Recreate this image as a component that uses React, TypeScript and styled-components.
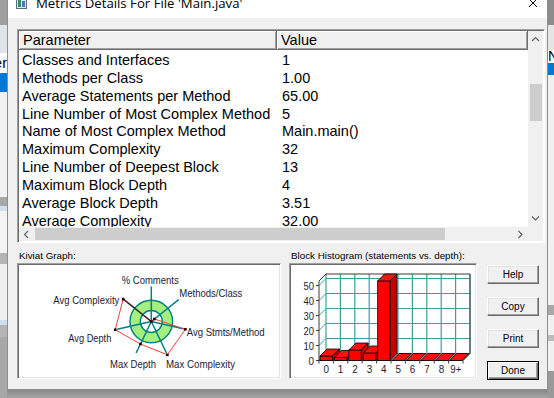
import React from 'react';
import styled, { createGlobalStyle } from 'styled-components';

const GlobalStyle = createGlobalStyle`
  html, body {
    margin: 0;
    padding: 0;
    overflow: hidden;
  }
  body {
    width: 554px;
    height: 398px;
    background: #a2a2a2;
    font-family: 'Liberation Sans', Arial, sans-serif;
  }
`;

const Screen = styled.div`
  display: flex;
  width: 554px;
  height: 398px;
  overflow: hidden;
`;

const Backdrop = styled.div<{ $width: number }>`
  flex: none;
  width: ${(p) => p.$width}px;
  display: flex;
  flex-direction: column;
  overflow: hidden;
`;

const Band = styled.div<{ $h: number; $bg: string; $end?: boolean; $ink?: string }>`
  flex: none;
  height: ${(p) => p.$h}px;
  background: ${(p) => p.$bg};
  color: ${(p) => p.$ink ?? '#000'};
  font: 14.5px 'Liberation Sans', Arial, sans-serif;
  line-height: ${(p) => p.$h}px;
  white-space: nowrap;
  overflow: hidden;
  display: flex;
  justify-content: ${(p) => (p.$end ? 'flex-end' : 'flex-start')};
`;

const BandFill = styled.div<{ $bg: string }>`
  flex: 1;
  background: ${(p) => p.$bg};
`;

const DialogColumn = styled.div`
  flex: none;
  width: 541px;
  display: flex;
  flex-direction: column;
`;

const Dialog = styled.div`
  flex: none;
  height: 390px;
  box-sizing: border-box;
  border: 1px solid #8e8e8e;
  border-top: none;
  background: #f0f0f0;
  display: flex;
  flex-direction: column;
`;

const BelowDialog = styled.div`
  flex: 1;
  background: linear-gradient(#8a8a8a, #a4a4a4);
`;

const TitleBar = styled.div`
  flex: none;
  height: 18px;
  background: #fff;
  display: flex;
  align-items: flex-start;
  overflow: hidden;
  padding: 0 9px 0 8px;
`;

const TitleInner = styled.div`
  display: flex;
  align-items: center;
  gap: 9px;
  margin-top: -7px;
  height: 20px;
  flex: 1;
`;

const TitleText = styled.span`
  font: 13.2px 'Open Sans', 'Liberation Sans', sans-serif;
  color: #000;
  white-space: nowrap;
  flex: 1;
`;

const Body = styled.div`
  flex: 1;
  display: flex;
  flex-direction: column;
  padding: 11px 2px 0 9px;
`;

/* ---------- list view ---------- */

const ListFrame = styled.div`
  flex: none;
  width: 528px;
  height: 214px;
  box-sizing: border-box;
  border: 1px solid;
  border-color: #a0a0a0 #ffffff #ffffff #a0a0a0;
  box-shadow: inset 1px 1px 0 #6d6d6d;
  padding: 1px 0 0 1px;
  display: grid;
  grid-template-columns: 509px 15px;
  grid-template-rows: 196px 14px;
  background: #fff;
`;

const ListContent = styled.div`
  overflow: hidden;
  background: #fff;
`;

const HeaderRow = styled.div`
  display: grid;
  grid-template-columns: 258px 1fr;
  height: 19px;
  background: #f0f0f0;
`;

const HeaderCell = styled.div<{ $pad: number }>`
  box-sizing: border-box;
  height: 19px;
  border-right: 1px solid #6d6d6d;
  border-bottom: 1px solid #6d6d6d;
  box-shadow: inset 1px 1px 0 #ffffff, inset -1px -1px 0 #a0a0a0;
  padding-left: ${(p) => p.$pad}px;
  font-size: 14.5px;
  line-height: 18px;
  color: #000;
`;

const Rows = styled.div`
  padding-top: 2px;
`;

const Row = styled.div`
  display: grid;
  grid-template-columns: 258px 1fr;
  height: 17.85px;
  font-size: 14.5px;
  line-height: 17.85px;
  color: #000;
  white-space: nowrap;
`;

const Cell = styled.div<{ $pad: number }>`
  padding-left: ${(p) => p.$pad}px;
  overflow: hidden;
`;

const VScroll = styled.div`
  background: #f0f0f0;
  display: flex;
  flex-direction: column;
`;

const HScroll = styled.div`
  background: #f0f0f0;
  display: flex;
`;

const Corner = styled.div`
  background: #f0f0f0;
`;

const ArrowBox = styled.div<{ $vertical?: boolean }>`
  flex: none;
  width: 15px;
  height: ${(p) => (p.$vertical ? '17px' : '14px')};
  display: flex;
  align-items: center;
  justify-content: center;
`;

const Track = styled.div<{ $vertical?: boolean }>`
  flex: 1;
  display: flex;
  flex-direction: ${(p) => (p.$vertical ? 'column' : 'row')};
`;

const Thumb = styled.div<{ $vertical?: boolean; $offset: number; $size: number }>`
  flex: none;
  background: #cdcdcd;
  ${(p) =>
    p.$vertical
      ? `margin: ${p.$offset}px 1px 0 2px; height: ${p.$size}px;`
      : `margin: 1px 0 1px ${p.$offset}px; width: ${p.$size}px;`}
`;

/* ---------- bottom area ---------- */

const BottomArea = styled.div`
  display: flex;
  margin-top: 5px;
`;

const Group = styled.div<{ $width: number; $gap: number }>`
  flex: none;
  width: ${(p) => p.$width}px;
  margin-right: ${(p) => p.$gap}px;
  display: flex;
  flex-direction: column;
`;

const Caption = styled.div`
  height: 15px;
  line-height: 15px;
  padding-left: 2px;
  font-size: 9.8px;
  color: #000;
  white-space: nowrap;
`;

const Panel = styled.div`
  height: 116px;
  box-sizing: border-box;
  border: 1px solid;
  border-color: #a0a0a0 #ffffff #ffffff #a0a0a0;
  box-shadow: inset 1px 1px 0 #696969, inset -1px -1px 0 #e3e3e3;
  padding: 1px;
  background: #fff;
  svg {
    display: block;
  }
`;

const ButtonColumn = styled.div`
  flex: none;
  width: 52px;
  padding-top: 17px;
  display: flex;
  flex-direction: column;
  gap: 13px;
`;

const Button = styled.button<{ $default?: boolean }>`
  height: 19px;
  width: 52px;
  box-sizing: border-box;
  padding: 0;
  background: #f0f0f0;
  font: 10px 'Liberation Sans', Arial, sans-serif;
  color: #000;
  border: 1px solid;
  border-color: ${(p) => (p.$default ? '#000' : '#fff #696969 #696969 #fff')};
  box-shadow: ${(p) =>
    p.$default
      ? 'inset 1px 1px 0 #fff, inset -1px -1px 0 #696969, inset -2px -2px 0 #a0a0a0'
      : 'inset -1px -1px 0 #a0a0a0, inset 1px 1px 0 #e3e3e3'};
`;

/* ---------- icons ---------- */

const Chevron = ({ dir }: { dir: 'up' | 'down' | 'left' | 'right' }) => {
  const pts = {
    up: '1,5 4.5,1.5 8,5',
    down: '1,1.5 4.5,5 8,1.5',
    left: '5,1 1.5,4.5 5,8',
    right: '1.5,1 5,4.5 1.5,8',
  }[dir];
  const vertical = dir === 'up' || dir === 'down';
  return (
    <svg width={vertical ? 9 : 7} height={vertical ? 7 : 9}>
      <polyline points={pts} fill="none" stroke="#606060" strokeWidth="1.1" />
    </svg>
  );
};

const AppIcon = () => (
  <svg width="11" height="12" viewBox="0 0 11 12">
    <rect x="0.5" y="0.5" width="10" height="11" fill="#dfe7ee" stroke="#5b6f80" />
    <rect x="2" y="2" width="3" height="8" fill="#2f8f6f" />
    <rect x="6" y="4" width="3" height="6" fill="#4a78b8" />
  </svg>
);

const CloseIcon = () => (
  <svg width="10" height="10" viewBox="0 0 10 10">
    <path d="M1 1 L9 9 M9 1 L1 9" stroke="#000" strokeWidth="1" />
  </svg>
);

/* ---------- kiviat graph ---------- */

const KIVIAT = [
  { label: '% Comments', r: 0, tx: 102.7, ty: 19, tw: 57 },
  { label: 'Methods/Class', r: 4, tx: 160.3, ty: 31.7, tw: 63 },
  { label: 'Avg Stmts/Method', r: 35, tx: 167.7, ty: 70.7, tw: 78 },
  { label: 'Max Complexity', r: 37, tx: 147, ty: 102.7, tw: 69 },
  { label: 'Max Depth', r: 25, tx: 91, ty: 102.7, tw: 46 },
  { label: 'Avg Depth', r: 37, tx: 49.3, ty: 76.7, tw: 43 },
  { label: 'Avg Complexity', r: 36, tx: 34.3, ty: 39, tw: 66 },
];

const KiviatGraph = () => {
  const cx = 132.3;
  const cy = 56.5;
  const at = (k: number, r: number) => {
    const a = ((-90 + (k * 360) / 7) * Math.PI) / 180;
    return [cx + r * Math.cos(a), cy + r * Math.sin(a)];
  };
  const pts = KIVIAT.map((d, k) => at(k, d.r));
  const poly = pts.map((p) => p.join(',')).join(' ');
  const last = pts[pts.length - 1];
  return (
    <svg width="260" height="112">
      <circle cx={cx} cy={cy} r={21.3} fill="#a4f07f" stroke="#008080" strokeWidth="1.4" />
      <circle cx={cx} cy={cy} r={11} fill="#fff" stroke="#008080" strokeWidth="1.4" />
      {KIVIAT.map((_, k) => {
        const [x, y] = at(k, 35);
        return <line key={k} x1={cx} y1={cy} x2={x} y2={y} stroke="#008080" strokeWidth="1.5" />;
      })}
      <polyline points={poly} fill="none" stroke="#ff3b3b" strokeWidth="1" />
      <line x1={last[0]} y1={last[1]} x2={pts[0][0]} y2={pts[0][1]} stroke="#6a1616" strokeWidth="1.2" />
      {pts.map(([x, y], i) => (
        <rect key={i} x={x - 1.3} y={y - 1.3} width="2.6" height="2.6" fill="#200000" />
      ))}
      {KIVIAT.map((d) => (
        <text
          key={d.label}
          x={d.tx}
          y={d.ty}
          textLength={d.tw}
          lengthAdjust="spacingAndGlyphs"
          fontFamily="'Liberation Sans', Arial, sans-serif"
          fontSize="11"
          fill="#1c1c34"
        >
          {d.label}
        </text>
      ))}
    </svg>
  );
};

/* ---------- block histogram ---------- */

const FX = 28;
const FY = 95.5;
const DX = 7;
const DY = -7;
const COL = 14.4;
const UNIT = 1.5;
const TOP = 53;
const BARS = [3, 2, 7, 5, 53, 0, 0, 0, 0, 0];
const XLABELS = ['0', '1', '2', '3', '4', '5', '6', '7', '8', '9+'];
const GRID = '#3f9f9f';
const EDGE = '#3a3a3a';

const Histogram = () => {
  const backL = FX + DX;
  const backR = FX + DX + COL * 10;
  const backB = FY + DY;
  const backT = FY + DY - TOP * UNIT;
  const frontT = FY - TOP * UNIT;
  const ticks = [0, 10, 20, 30, 40, 50];
  return (
    <svg width="184" height="112">
      <rect x={backL} y={backT} width={COL * 10} height={backB - backT} fill="#fff" />
      {Array.from({ length: 11 }, (_, i) => (
        <g key={i}>
          <line x1={backL + COL * i} y1={backT} x2={backL + COL * i} y2={backB} stroke={GRID} strokeWidth="1.2" />
          <line x1={FX + COL * i} y1={FY} x2={backL + COL * i} y2={backB} stroke={GRID} strokeWidth="1" />
          <line x1={FX + COL * i} y1={FY} x2={FX + COL * i} y2={FY + 3} stroke={EDGE} strokeWidth="1" />
        </g>
      ))}
      {ticks.map((v) => (
        <g key={v}>
          <line x1={backL} y1={backB - v * UNIT} x2={backR} y2={backB - v * UNIT} stroke={GRID} strokeWidth="1.2" />
          <line x1={FX} y1={FY - v * UNIT} x2={backL} y2={backB - v * UNIT} stroke={GRID} strokeWidth="1" />
          <line x1={FX - 3} y1={FY - v * UNIT} x2={FX} y2={FY - v * UNIT} stroke={EDGE} strokeWidth="1" />
          <text
            x={FX - 5}
            y={FY - v * UNIT + 4}
            textAnchor="end"
            textLength={v === 0 ? 5.5 : 10.5}
            lengthAdjust="spacingAndGlyphs"
            fontFamily="'Liberation Sans', Arial, sans-serif"
            fontSize="11"
            fill="#1c1c34"
          >
            {v}
          </text>
        </g>
      ))}
      <path
        d={`M${FX} ${FY} L${FX} ${frontT} L${backL} ${backT} L${backR} ${backT} L${backR} ${backB} L${FX + COL * 10} ${FY} Z`}
        fill="none"
        stroke={EDGE}
        strokeWidth="1"
      />
      {BARS.map((v, i) => {
        const x0 = FX + COL * i + 1;
        const w = 12.4;
        const yt = FY - v * UNIT;
        const top = `${x0},${yt} ${x0 + w},${yt} ${x0 + w + DX},${yt + DY} ${x0 + DX},${yt + DY}`;
        const side = `${x0 + w},${yt} ${x0 + w + DX},${yt + DY} ${x0 + w + DX},${FY + DY} ${x0 + w},${FY}`;
        return (
          <g key={i} stroke="#000" strokeWidth="0.8" strokeLinejoin="round">
            {v > 0 && <polygon points={side} fill="#c80000" />}
            {v > 0 && <rect x={x0} y={yt} width={w} height={v * UNIT} fill="#ff0000" />}
            <polygon points={top} fill="#ff0f0f" />
          </g>
        );
      })}
      {XLABELS.map((l, i) => (
        <text
          key={l}
          x={FX + COL * i + COL / 2}
          y={108}
          textAnchor="middle"
          textLength={l.length > 1 ? 11 : 5.5}
          lengthAdjust="spacingAndGlyphs"
          fontFamily="'Liberation Sans', Arial, sans-serif"
          fontSize="11"
          fill="#1c1c34"
        >
          {l}
        </text>
      ))}
    </svg>
  );
};

/* ---------- data ---------- */

const METRICS: [string, string][] = [
  ['Classes and Interfaces', '1'],
  ['Methods per Class', '1.00'],
  ['Average Statements per Method', '65.00'],
  ['Line Number of Most Complex Method', '5'],
  ['Name of Most Complex Method', 'Main.main()'],
  ['Maximum Complexity', '32'],
  ['Line Number of Deepest Block', '13'],
  ['Maximum Block Depth', '4'],
  ['Average Block Depth', '3.51'],
  ['Average Complexity', '32.00'],
];

const LEFT_BANDS: [number, string, string?][] = [
  [25, '#9e9e9e'],
  [28, '#dfe4ea'],
  [20, '#ffffff', 'er'],
  [19, '#0078d7'],
  [105, '#f2f2f2'],
  [9, '#a9a9a9'],
  [5, '#cfe0f2'],
  [42, '#f3f3f3'],
  [11, '#b4b4b4'],
  [56, '#eeeeee'],
  [5, '#cfe0f2'],
  [12, '#b4b4b4'],
];

const RIGHT_BANDS: [number, string, string?][] = [
  [25, '#8c8c8c'],
  [25, '#e5e5e5'],
  [13, '#ffffff', 'N'],
  [12, '#0078d7'],
  [230, '#f0f0f0'],
  [10, '#a8a8a8'],
  [20, '#f0f0f0'],
  [6, '#bcbcbc'],
  [30, '#f0f0f0'],
];

const App = () => (
  <>
    <GlobalStyle />
    <Screen>
      <Backdrop $width={7}>
        {LEFT_BANDS.map(([h, bg, t], i) => (
          <Band key={i} $h={h} $bg={bg} $end>
            {t}
          </Band>
        ))}
        <BandFill $bg="#a8a8a8" />
      </Backdrop>

      <DialogColumn>
        <Dialog>
          <TitleBar>
            <TitleInner>
              <AppIcon />
              <TitleText>Metrics Details For File 'Main.java'</TitleText>
              <CloseIcon />
            </TitleInner>
          </TitleBar>

          <Body>
            <ListFrame>
              <ListContent>
                <HeaderRow>
                  <HeaderCell $pad={4}>Parameter</HeaderCell>
                  <HeaderCell $pad={4}>Value</HeaderCell>
                </HeaderRow>
                <Rows>
                  {METRICS.map(([name, value]) => (
                    <Row key={name}>
                      <Cell $pad={3}>{name}</Cell>
                      <Cell $pad={5}>{value}</Cell>
                    </Row>
                  ))}
                </Rows>
              </ListContent>
              <VScroll>
                <ArrowBox $vertical>
                  <Chevron dir="up" />
                </ArrowBox>
                <Track $vertical>
                  <Thumb $vertical $offset={36} $size={37} />
                </Track>
                <ArrowBox $vertical>
                  <Chevron dir="down" />
                </ArrowBox>
              </VScroll>
              <HScroll>
                <ArrowBox>
                  <Chevron dir="left" />
                </ArrowBox>
                <Track>
                  <Thumb $offset={1} $size={410} />
                </Track>
                <ArrowBox>
                  <Chevron dir="right" />
                </ArrowBox>
              </HScroll>
              <Corner />
            </ListFrame>

            <BottomArea>
              <Group $width={264} $gap={8}>
                <Caption>Kiviat Graph:</Caption>
                <Panel>
                  <KiviatGraph />
                </Panel>
              </Group>
              <Group $width={188} $gap={10}>
                <Caption>Block Histogram (statements vs. depth):</Caption>
                <Panel>
                  <Histogram />
                </Panel>
              </Group>
              <ButtonColumn>
                <Button>Help</Button>
                <Button>Copy</Button>
                <Button>Print</Button>
                <Button $default>Done</Button>
              </ButtonColumn>
            </BottomArea>
          </Body>
        </Dialog>
        <BelowDialog />
      </DialogColumn>

      <Backdrop $width={6}>
        {RIGHT_BANDS.map(([h, bg, t], i) => (
          <Band key={i} $h={h} $bg={bg}>
            {t}
          </Band>
        ))}
        <BandFill $bg="#9a9a9a" />
      </Backdrop>
    </Screen>
  </>
);

export default App;
